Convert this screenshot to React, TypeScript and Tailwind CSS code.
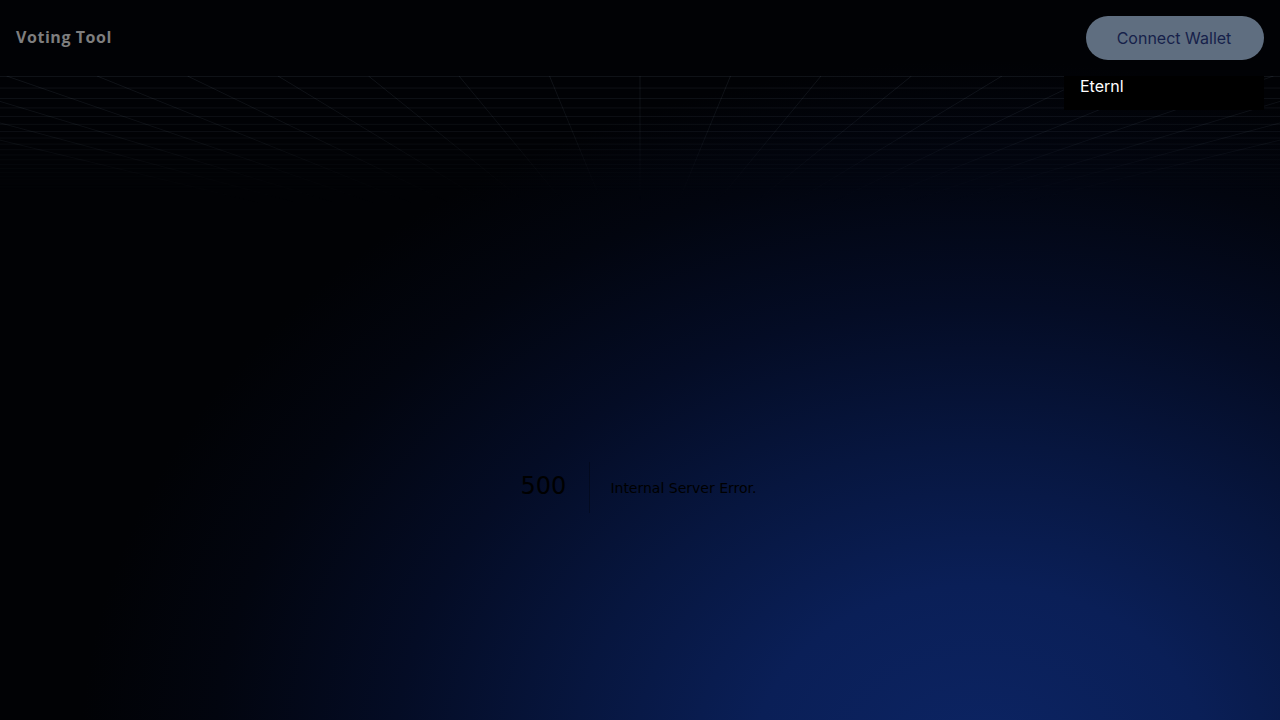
import React from "react";

function PerspectiveGrid() {
  const vx = 640;
  const vy = 219; // vanishing point relative to svg top (295 - 76)
  const radials: number[] = [];
  for (let k = -10; k <= 10; k++) radials.push(vx + 90.5 * k);
  const horizontals: number[] = [];
  for (let n = 0; n < 22; n++) {
    const d = 1 / (0.004566 + 0.000255 * n);
    horizontals.push(vy - d + 0.5);
  }
  return (
    <svg width="1280" height="130" viewBox="0 0 1280 130" className="block">
      <defs>
        <linearGradient id="fade" x1="0" y1="0" x2="0" y2="1">
          <stop offset="0" stopColor="#fff" stopOpacity="1" />
          <stop offset="0.45" stopColor="#fff" stopOpacity="0.7" />
          <stop offset="0.8" stopColor="#fff" stopOpacity="0.15" />
          <stop offset="1" stopColor="#fff" stopOpacity="0" />
        </linearGradient>
        <mask id="fadeMask">
          <rect x="0" y="0" width="1280" height="130" fill="url(#fade)" />
        </mask>
      </defs>
      <g mask="url(#fadeMask)" stroke="#94a3b8" strokeOpacity="0.11" strokeWidth="1" fill="none">
        {horizontals.map((y, i) => (
          <line key={"h" + i} x1="0" y1={y} x2="1280" y2={y} />
        ))}
        {radials.map((x, i) => (
          <line key={"r" + i} x1={x} y1="0" x2={vx} y2={vy} />
        ))}
      </g>
    </svg>
  );
}

export default function App() {
  return (
    <div className="relative h-[720px] w-full overflow-hidden bg-[#010205] bg-[radial-gradient(900px_700px_at_980px_760px,#0c2463_0%,#0a1f57_25%,#07163f_45%,#040c25_65%,#02050f_85%,#010205_100%)]">
      <header className="relative flex h-[76px] items-center justify-between pl-4 pr-4">
        <h1 className="mt-[-2px] text-[16px] font-bold tracking-[0.55px] text-[#7e7e7e] [font-family:'Open_Sans',sans-serif]">
          Voting Tool
        </h1>
        <div className="relative">
          <button className="h-[44px] w-[178px] rounded-full bg-[#5f6e80] pr-[2px] text-[16px] text-[#16214a] [font-family:Inter,sans-serif]">
            Connect Wallet
          </button>
          <div className="absolute right-0 top-[60px] z-10 h-[34px] w-[200px] bg-black pl-4 text-[16px] leading-[20px] text-white [font-family:Inter,sans-serif]">
            Eternl
          </div>
        </div>
      </header>
      <PerspectiveGrid />
      <main className="mt-[256px] flex justify-center text-black [font-family:'DejaVu_Sans',sans-serif]">
        <div className="ml-[-3px] flex">
          <h1 className="mr-5 border-r border-black/30 pr-[23px] text-[24px] font-medium leading-[49px]">500</h1>
          <h2 className="mt-[2px] text-[14px] font-normal leading-[49px]">Internal Server Error.</h2>
        </div>
      </main>
    </div>
  );
}
